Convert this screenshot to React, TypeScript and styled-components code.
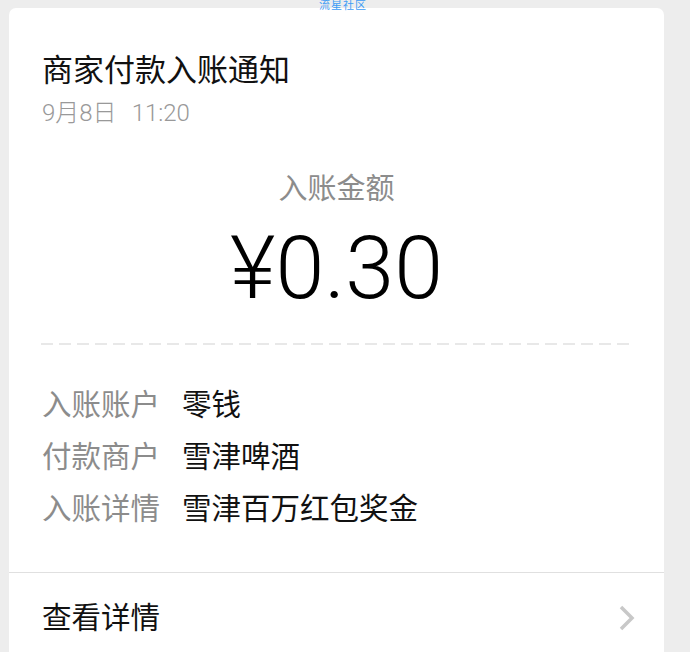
import React from 'react';
import styled, { createGlobalStyle } from 'styled-components';

const GlobalStyle = createGlobalStyle`
  html, body {
    margin: 0;
    padding: 0;
    background: #ededed;
  }
  body {
    font-family: "Roboto", "Noto Sans CJK SC", sans-serif;
    -webkit-font-smoothing: antialiased;
  }
`;

const Page = styled.div`
  position: relative;
  width: 690px;
  height: 652px;
  overflow: hidden;
  padding: 8px 26px 0 9px;
  box-sizing: border-box;
`;

const Watermark = styled.div`
  position: absolute;
  top: 0;
  left: 319px;
  font-size: 11px;
  line-height: 12px;
  color: #3d9cf5;
  letter-spacing: 1px;
`;

const Card = styled.div`
  background: #fff;
  border-radius: 7px;
  height: 700px;
`;

const Header = styled.div`
  padding: 44px 33px 0;
`;

const Title = styled.div`
  font-size: 31px;
  line-height: 37px;
  color: #111;
`;

const DateLine = styled.div`
  margin-top: 10px;
  font-size: 24px;
  line-height: 28px;
  font-weight: 300;
  color: #999;
  white-space: pre;
`;

const Time = styled.span`
  margin-left: 15px;
`;

const AmountBlock = styled.div`
  display: flex;
  flex-direction: column;
  align-items: center;
  margin-top: 44px;
`;

const AmountLabel = styled.div`
  font-size: 29px;
  line-height: 36px;
  color: #8c8c8c;
`;

const Amount = styled.div`
  margin-top: 13px;
  font-size: 88px;
  line-height: 96px;
  font-weight: 300;
  color: #000;
`;

const Dashed = styled.div`
  margin: 27px 33px 0 32px;
  height: 2px;
  background-image: linear-gradient(to right, #e8e8e8 0 12px, transparent 12px 18px);
  background-size: 18px 2px;
  background-repeat: repeat-x;
`;

const Rows = styled.div`
  display: flex;
  flex-direction: column;
  gap: 16px;
  padding: 42px 33px 0;
`;

const Row = styled.div`
  display: flex;
  align-items: center;
  font-size: 29.5px;
  line-height: 36px;
`;

const Label = styled.span`
  width: 140px;
  color: #8c8c8c;
`;

const Value = styled.span`
  color: #111;
`;

const Divider = styled.div`
  margin-top: 45px;
  height: 1px;
  background: #e0e0e0;
`;

const LinkRow = styled.div`
  display: flex;
  align-items: center;
  justify-content: space-between;
  padding: 27px 29px 0 33px;
  font-size: 29.5px;
  line-height: 36px;
  color: #111;
`;

const Chevron = styled.svg`
  width: 16px;
  height: 26px;
`;

const details: [string, string][] = [
  ['入账账户', '零钱'],
  ['付款商户', '雪津啤酒'],
  ['入账详情', '雪津百万红包奖金'],
];

export default function App() {
  return (
    <Page>
      <GlobalStyle />
      <Watermark>流星社区</Watermark>
      <Card>
        <Header>
          <Title>商家付款入账通知</Title>
          <DateLine>
            9月8日<Time>11:20</Time>
          </DateLine>
        </Header>
        <AmountBlock>
          <AmountLabel>入账金额</AmountLabel>
          <Amount>¥0.30</Amount>
        </AmountBlock>
        <Dashed />
        <Rows>
          {details.map(([k, v]) => (
            <Row key={k}>
              <Label>{k}</Label>
              <Value>{v}</Value>
            </Row>
          ))}
        </Rows>
        <Divider />
        <LinkRow>
          <span>查看详情</span>
          <Chevron viewBox="0 0 16 26">
            <path d="M2 2 L13 13 L2 24" fill="none" stroke="#c8c8c8" strokeWidth="3.5" />
          </Chevron>
        </LinkRow>
      </Card>
    </Page>
  );
}
